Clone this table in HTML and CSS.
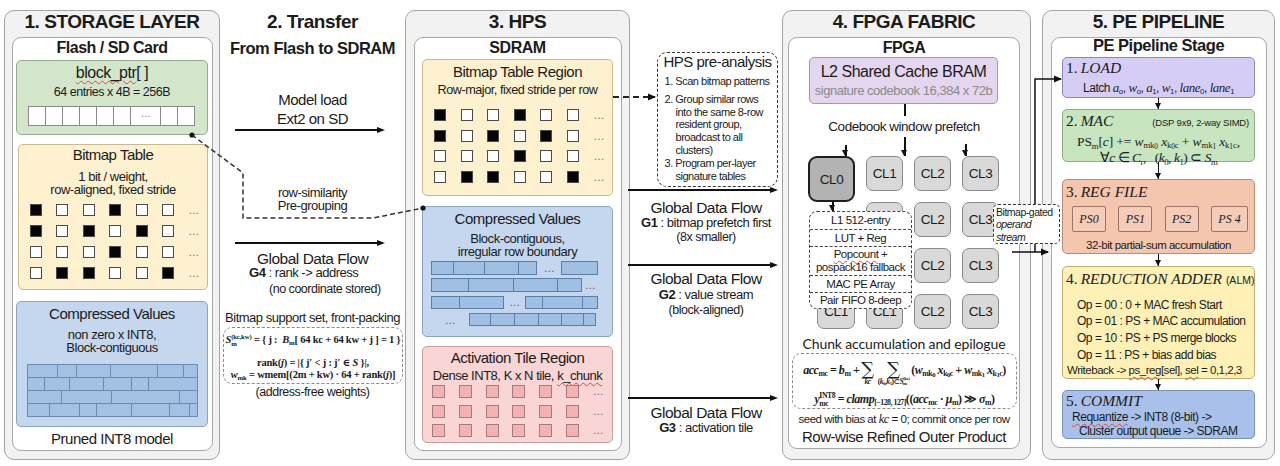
FILE: index.html
```html
<!DOCTYPE html>
<html lang="en">
<head>
<meta charset="utf-8">
<title>Sparse INT8 inference pipeline</title>
<link rel="stylesheet" href="styles.css">
</head>
<body>
<div class="page">

  <section class="panel p1">
    <h1 class="ptitle">1. STORAGE LAYER</h1>
    <div class="inner">
      <h2 class="sub">Flash / SD Card</h2>
      <div class="box green ptrbox">
        <div class="bt"><span class="sp">block_ptr</span>[ ]</div>
        <div class="bs">64 entries x 4B = 256B</div>
        <div class="cells"><span></span><span></span><span></span><span></span><span></span><span></span><span class="wide">…</span><span></span><span></span></div>
      </div>
      <div class="box yellow bm1">
        <div class="bt">Bitmap Table</div>
        <div class="bl">1 bit / weight,<br>row-aligned, fixed stride</div>
        <div class="bits">
          <i class="k"></i><i></i><i></i><i class="k"></i><i></i><i></i><b>…</b>
          <i class="k"></i><i></i><i class="k"></i><i></i><i class="k"></i><i></i><b>…</b>
          <i></i><i></i><i></i><i class="k"></i><i></i><i></i><b>…</b>
          <i></i><i class="k"></i><i class="k"></i><i></i><i></i><i class="k"></i><b>…</b>
        </div>
      </div>
      <div class="box blue cv1">
        <div class="bt">Compressed Values</div>
        <div class="bl">non zero x INT8,<br>Block-contiguous</div>
        <div class="wall">
          <div class="wr"><span style="width:30px"></span><span style="width:19px"></span><span style="width:34px"></span><span style="width:47px"></span><span style="width:26px"></span><span style="width:14px"></span></div>
          <div class="wr"><span style="width:17px"></span><span style="width:25px"></span><span style="width:34px"></span><span style="width:28px"></span><span style="width:17px"></span><span style="width:49px"></span></div>
          <div class="wr"><span style="width:34px"></span><span style="width:50px"></span><span style="width:68px"></span><span style="width:18px"></span></div>
          <div class="wr"><span style="width:22px"></span><span style="width:30px"></span><span style="width:17px"></span><span style="width:35px"></span><span style="width:38px"></span><span style="width:20px"></span><span style="width:8px"></span></div>
        </div>
      </div>
      <div class="foot">Pruned INT8 model</div>
    </div>
  </section>

  <div class="tcol">
    <div class="ttl">2. Transfer</div>
    <div class="tsub">From Flash to SDRAM</div>
    <div class="t15 ml">Model load<br>Ext2 on SD</div>
    <div class="harr ha1"></div>
    <div class="t13 rs">row-similarity<br>Pre-grouping</div>
    <div class="harr ha2"></div>
    <div class="gdf g4h">Global Data Flow</div>
    <div class="gline g4a"><b>G4</b> : rank -&gt; address</div>
    <div class="pline g4b">(no coordinate stored)</div>
    <div class="t13 bss">Bitmap support set, front-packing</div>
    <div class="fbox1">
      <div class="fl1"><i>S</i><span class="ss"><sup>(kc,kw)</sup><sub>m</sub></span> = { j :&nbsp; <i>B</i><sub>m</sub>[ 64 kc + 64 kw + j ] = 1 }</div>
      <div class="fl2">rank(<i>j</i>) = |{ j′ &lt; j : j′ ∈ <i>S</i> }|,</div>
      <div class="fl3"><i>w</i><sub>mk</sub> = wmem[(2m + kw) · 64 + rank(<i>j</i>)]</div>
    </div>
    <div class="pline afw">(address-free weights)</div>
  </div>

  <section class="panel p3">
    <h1 class="ptitle">3. HPS</h1>
    <div class="inner">
      <h2 class="sub s3">SDRAM</h2>
      <div class="box yellow bm3">
        <div class="bt">Bitmap Table Region</div>
        <div class="bl">Row-major, fixed stride per row</div>
        <div class="bits">
          <i class="k"></i><i></i><i></i><i class="k"></i><i></i><i></i><b>…</b>
          <i class="k"></i><i></i><i class="k"></i><i></i><i class="k"></i><i></i><b>…</b>
          <i></i><i></i><i></i><i class="k"></i><i></i><i></i><b>…</b>
          <i></i><i class="k"></i><i class="k"></i><i></i><i></i><i class="k"></i><b>…</b>
        </div>
      </div>
      <div class="box blue cv3">
        <div class="bt">Compressed Values</div>
        <div class="bl">Block-contiguous,<br>irregular row boundary</div>
        <div class="wall3">
          <div class="w3"><span style="width:23px"></span><span style="width:32px"></span><span style="width:35px"></span><span style="width:19px"></span><em style="width:24px">…</em><span style="width:37px"></span></div>
          <div class="w3"><span style="width:38px"></span><span style="width:46px"></span><span style="width:45px"></span><span style="width:25px"></span><em style="width:16px">…</em></div>
          <div class="w3"><span style="width:29px"></span><span style="width:45px"></span><em style="width:21px">…</em><span style="width:18px"></span><span style="width:41px"></span><span style="width:16px"></span></div>
          <div class="w3"><em style="width:38px">…</em><span style="width:22px"></span><span style="width:25px"></span><span style="width:25px"></span><span style="width:24px"></span><span style="width:23px"></span><span style="width:13px"></span></div>
        </div>
      </div>
      <div class="box pink at3">
        <div class="bt">Activation Tile Region</div>
        <div class="bl">Dense INT8, K x N tile, <span class="sp">k_chunk</span></div>
        <div class="pinks">
          <i></i><i></i><i></i><i></i><i></i><i></i><b>…</b>
          <i></i><i></i><i></i><i></i><i></i><i></i><b>…</b>
          <i></i><i></i><i></i><i></i><i></i><i></i><b>…</b>
        </div>
      </div>
    </div>
  </section>

  <div class="gcol">
    <div class="pre">
      <div class="pt">HPS pre-analysis</div>
      <ol>
        <li>1. Scan bitmap patterns</li>
        <li class="li2">2. Group similar rows<br>into the same 8-row<br>resident group,<br>broadcast to all<br>clusters)</li>
        <li>3. Program per-layer<br>signature tables</li>
      </ol>
    </div>
    <div class="harr hg1"></div>
    <div class="gdf gA">Global Data Flow</div>
    <div class="gline gB"><b>G1</b> : bitmap prefetch first</div>
    <div class="pline gC">(8x smaller)</div>
    <div class="harr hg2"></div>
    <div class="gdf gD">Global Data Flow</div>
    <div class="gline gE"><b>G2</b> : value stream</div>
    <div class="pline gF">(block-aligned)</div>
    <div class="harr hg3"></div>
    <div class="gdf gG">Global Data Flow</div>
    <div class="gline gH"><b>G3</b> : activation tile</div>
  </div>

  <section class="panel p4">
    <h1 class="ptitle">4. FPGA FABRIC</h1>
    <div class="inner">
      <h2 class="sub s4">FPGA</h2>
      <div class="box lilac l2">
        <div class="l2t">L2 Shared Cache BRAM</div>
        <div class="l2s">signature codebook 16,384 x 72b</div>
      </div>
      <div class="vline"></div>
      <div class="cwp">Codebook window prefetch</div>
      <div class="clusters">
        <i class="va v1"></i><i class="va v2"></i><i class="va v3"></i>
        <div class="clg">
          <div class="cl cl0">CL0</div>
          <div class="cl">CL1</div><div class="cl">CL2</div><div class="cl">CL3</div>
          <div class="cl"></div><div class="cl">CL2</div><div class="cl">CL3</div>
          <div class="cl c0"></div><div class="cl"></div><div class="cl">CL2</div><div class="cl">CL3</div>
          <div class="cl c0">CL1</div><div class="cl">CL1</div><div class="cl">CL2</div><div class="cl">CL3</div>
        </div>
        <i class="va v4"></i>
        <div class="l1">
          <div class="l1r r1">L1 512-entry</div>
          <div class="l1r r2">LUT + Reg</div>
          <div class="l1r r3"><span><span class="sp">Popcount</span> +<br>pospack16 fallback</span></div>
          <div class="l1r r4">MAC PE Array</div>
          <div class="l1r r5">Pair FIFO 8-deep</div>
        </div>
      </div>
      <div class="chunk">Chunk accumulation and epilogue</div>
      <div class="fbox2">
        <div class="ff1">
          <span class="fx"><i>acc</i><sub>mc</sub> = <i>b</i><sub>m</sub> +</span>
          <span class="sum"><b>∑</b><small><i>kc</i></small></span>
          <span class="sum"><b>∑</b><small>(<i>k</i><sub>0</sub>,<i>k</i><sub>1</sub>)⊂<i>S</i><span class="ss"><sup>(kc)</sup><sub>m</sub></span></small></span>
          <span class="fx">(<i>w</i><sub>mk<sub>0</sub></sub> <i>x</i><sub>k<sub>0</sub>c</sub> + <i>w</i><sub>mk<sub>1</sub></sub> <i>x</i><sub>k<sub>1</sub>c</sub>)</span>
        </div>
        <div class="ff2"><i>y</i><span class="ss"><sup>INT8</sup><sub>mc</sub></span> = <i>clamp</i><sub>[−128, 127]</sub>((<i>acc</i><sub>mc</sub> · <i>μ</i><sub>m</sub>) ≫ <i>σ</i><sub>m</sub>)</div>
      </div>
      <div class="seed">seed with bias at <i class="mi">kc</i> = 0; commit once per row</div>
      <div class="rwo">Row-wise Refined Outer Product</div>
    </div>
  </section>

  <section class="panel p5">
    <h1 class="ptitle">5. PE PIPELINE</h1>
    <div class="inner">
      <h2 class="sub s5">PE Pipeline Stage</h2>
      <div class="stage load">
        <div class="st"><span class="num">1.</span><i>LOAD</i></div>
        <div class="sl">Latch <i>a</i><sub>o</sub>, <i>w</i><sub>o</sub>, <i>a</i><sub>1</sub>, <i>w</i><sub>1</sub>, <i>lane</i><sub>0</sub>, <i>lane</i><sub>1</sub></div>
      </div>
      <div class="varr a1"></div>
      <div class="stage mac">
        <div class="st sth"><span><span class="num">2.</span><i>MAC</i></span><span class="note">(DSP 9x9, 2-way SIMD)</span></div>
        <div class="mf">PS<sub>m</sub>[<i>c</i>] += <i>w</i><sub>mk<sub>0</sub></sub> <i>x</i><sub>k<sub>0</sub>c</sub> + <i>w</i><sub>mk<sub>1</sub></sub> <i>x</i><sub>k<sub>1</sub>c</sub>,</div>
        <div class="mf2">∀<i>c</i> ∈ <i>C</i><sub>r</sub>,&nbsp;&nbsp; (<i>k</i><sub>0</sub>, <i>k</i><sub>1</sub>) ⊂ <i>S</i><sub>m</sub></div>
      </div>
      <div class="varr a2"></div>
      <div class="stage reg">
        <div class="st"><span class="num">3.</span><i>REG FILE</i></div>
        <div class="psrow"><span class="ps">PS0</span><span class="ps">PS1</span><span class="ps">PS2</span><span class="ps wide">PS 4</span></div>
        <div class="rl">32-bit partial-sum accumulation</div>
      </div>
      <div class="varr a3"></div>
      <div class="stage red">
        <div class="st"><span class="num">4.</span><i>REDUCTION ADDER</i> <span class="alm">(ALM)</span></div>
        <div class="ops">
          <div>Op = 00 : 0 + MAC fresh Start</div>
          <div>Op = 01 : PS + MAC accumulation</div>
          <div>Op = 10 : PS + PS merge blocks</div>
          <div>Op = 11 : PS + bias add bias</div>
        </div>
        <div class="wb">Writeback -&gt; <span class="sp">ps_reg</span>[sel], <span class="sp">sel</span> = 0,1,2,3</div>
      </div>
      <div class="varr a4"></div>
      <div class="stage commit">
        <div class="st"><span class="num">5.</span><i>COMMIT</i></div>
        <div class="c1"><span class="sp">Requantize</span> -&gt; INT8 (8-bit) -&gt;</div>
        <div class="c2">Cluster output queue -&gt; SDRAM</div>
      </div>
    </div>
  </section>

</div>

<svg class="wires" width="1280" height="466" viewBox="0 0 1280 466">
  <defs>
    <marker id="ah" markerWidth="8" markerHeight="8" refX="7" refY="4" orient="auto" markerUnits="userSpaceOnUse">
      <path d="M0,0.5 L8,4 L0,7.5 Z" fill="#111"/>
    </marker>
  </defs>
  <path d="M192,135 L243,173 L243,218 L373,218 L420,208.6" fill="none" stroke="#333" stroke-width="1.5" stroke-dasharray="5 3"/>
  <circle cx="192" cy="135" r="2.6" fill="#111"/>
  <circle cx="423" cy="208" r="2.6" fill="#111"/>
  <path d="M613,97 L655,97" fill="none" stroke="#222" stroke-width="1.8" stroke-dasharray="6 4" marker-end="url(#ah)"/>
  <path d="M1012,252 L1048,252" fill="none" stroke="#111" stroke-width="1.5" marker-end="url(#ah)"/>
  <path d="M1035,252 L1035,79 L1061,79" fill="none" stroke="#111" stroke-width="1.5" marker-end="url(#ah)"/>
</svg>

<div class="gated">Bitmap-gated<br><i>operand</i><br><i>stream</i></div>
</body>
</html>
```

FILE: styles.css
```css
* { box-sizing: border-box; margin: 0; padding: 0; }
html, body { width: 1280px; height: 466px; overflow: hidden; background: #fff; }
body {
  font-family: "Liberation Sans", Arial, sans-serif;
  color: #1b1b1b;
  letter-spacing: -0.03em;
  position: relative;
}
.page { display: flex; align-items: flex-start; padding: 10px 0 0 4px; }

/* panels */
.panel {
  height: 450px; flex: none;
  background: #f2f2f2; border: 1.5px solid #a4a4a4; border-radius: 10px;
  display: flex; flex-direction: column;
}
.ptitle { font-size: 19px; font-weight: 700; line-height: 22px; height: 25.5px; text-align: center; }
.inner {
  flex: 1; min-height: 0; background: #fff;
  border: 1.5px solid #a8a8a8; border-radius: 9px;
  display: flex; flex-direction: column;
}
.sub { font-size: 16px; font-weight: 700; line-height: 20px; height: 22.5px; text-align: center; flex: none; }

.p1 { width: 216px; padding: 0 6.5px 8.5px; }
.p1 .inner { padding: 0 3.5px; }
.p3 { width: 225px; padding: 0 7.5px 8.5px; }
.p3 .inner { padding: 0 7.5px; }
.p4 { width: 249px; padding: 0 10px 10.5px 5px; }
.p5 { width: 233px; padding: 0 7.5px 11.5px; margin-left: 11px; }
.p5 .inner { padding: 0 10.5px; }
.s3 { height: 21.5px; }
.s4 { height: 19.5px; }
.s5 { height: 19.5px; line-height: 15px; font-size: 16.5px; }

/* generic coloured boxes */
.box { border: 1px solid; border-radius: 5px; text-align: center; flex: none; }
.green { background: #d3e6cc; border-color: #93ad8c; }
.yellow { background: #fdf1cf; border-color: #c9b98f; }
.blue { background: #c4d7ee; border-color: #8da4c2; }
.pink { background: #f9d5d5; border-color: #c7a0a0; }
.lilac { background: #e4d6ee; border-color: #a394b0; }
.bt { font-size: 15px; line-height: 20px; }
.bl { font-size: 13px; line-height: 13px; }
.sp { text-decoration: underline wavy #d24a4a; text-decoration-thickness: 1px; text-underline-offset: 2px; }

/* storage */
.ptrbox { height: 75px; }
.ptrbox .bt { font-size: 16px; line-height: 18px; margin-top: 3px; }
.bs { font-size: 12.5px; line-height: 16px; margin-top: 2px; }
.cells { display: flex; justify-content: center; margin-top: 6px; height: 20px; }
.cells span { width: 18px; height: 20px; background: #fff; border: 1px solid #8a8a8a; margin-left: -1px; font-size: 10px; color: #777; line-height: 14px; }
.cells span.wide { width: 31px; }

.bm1 { height: 146px; margin: 9px 0 0 2px; }
.bm1 .bl { margin-top: 4.5px; }
.bits {
  display: grid; grid-template-columns: repeat(6, 12px) 14px;
  column-gap: 14.4px; row-gap: 9px; padding-left: 11px; margin-top: 8.5px;
}
.bits i { display: block; width: 12px; height: 12px; background: #fff; border: 1px solid #4a4a4a; }
.bits i.k { background: #050505; }
.bits b, .pinks b { font-weight: 400; font-size: 11px; color: #666; line-height: 12px; text-align: left; }

.cv1 { height: 126px; margin-top: 11px; }
.cv1 .bt { margin-top: 2px; }
.cv1 .bl { margin-top: 3.5px; }
.wall { width: 171px; margin: 10.5px auto 0; border-top: 1px solid #6a8bb2; border-left: 1px solid #6a8bb2; background: #a3c1e3; }
.wr { display: flex; height: 13px; }
.wr span { flex: none; height: 13px; border-right: 1px solid #6a8bb2; border-bottom: 1px solid #6a8bb2; }
.foot { font-size: 15px; line-height: 18px; margin-top: 2.5px; text-align: center; }

/* transfer column */
.tcol { width: 185px; flex: none; display: flex; flex-direction: column; text-align: center; }
.ttl { font-size: 19px; font-weight: 700; line-height: 24px; }
.tsub { font-size: 16.5px; font-weight: 700; line-height: 20px; margin-top: 4px; }
.t15 { font-size: 15px; line-height: 19px; }
.t13 { font-size: 13px; line-height: 13px; }
.ml { margin-top: 31.5px; }
.harr { position: relative; height: 8px; flex: none; }
.harr::before { content: ""; position: absolute; left: 0; right: 6px; top: 3.25px; height: 1.5px; background: #111; }
.harr::after {
  content: ""; position: absolute; right: 0; top: 0.5px;
  border-left: 8px solid #111; border-top: 3.5px solid transparent; border-bottom: 3.5px solid transparent;
}
.ha1 { margin: -1.5px 20px 0 15px; }
.rs { margin-top: 51.5px; }
.ha2 { margin: 27.5px 20px 0 15px; }
.gdf { font-size: 15.5px; line-height: 17px; }
.gline { font-size: 13px; line-height: 16px; }
.gline b { font-weight: 700; }
.pline { font-size: 12.5px; line-height: 16px; }
.g4h { margin-top: 2.5px; }
.g4a { margin-top: -1.5px; text-align: left; padding-left: 29px; }
.g4b { text-align: left; padding-left: 49px; }
.bss { line-height: 16px; margin-top: 13px; white-space: nowrap; }
.fbox1 {
  height: 57px; margin: 1px 2px 0 3px;
  border: 1.5px dashed #8a8a8a; border-radius: 9px;
  font-family: "Liberation Serif", "DejaVu Serif", serif; font-weight: 700; font-size: 10.5px;
  white-space: nowrap; letter-spacing: -0.02em;
}
.fl1 { line-height: 16px; margin-top: 4px; }
.fl2 { line-height: 12px; margin-top: 8.5px; }
.fl3 { line-height: 12px; }
sub, sup { font-size: 65%; line-height: 0; }
sub { vertical-align: -0.3em; }
sup { vertical-align: 0.55em; }
sub sub { font-size: 85%; vertical-align: -0.15em; }
.ss { display: inline-flex; flex-direction: column; vertical-align: middle; font-size: 65%; line-height: 1; text-align: left; }
.ss sub, .ss sup { font-size: 100%; vertical-align: baseline; line-height: 1; }

/* HPS */
.bm3 { height: 137px; }
.bm3 .bt { margin-top: 1.5px; line-height: 19px; }
.bm3 .bl { line-height: 15px; margin-top: 2px; font-size: 12.7px; white-space: nowrap; }
.bm3 .bits { margin-top: 11.5px; column-gap: 14.6px; row-gap: 8.7px; }
.cv3 { height: 131px; margin-top: 10px; }
.cv3 .bt { margin-top: 1.5px; line-height: 19px; }
.cv3 .bl { margin-top: 4.5px; }
.wall3 { display: flex; flex-direction: column; gap: 3.8px; margin-top: 3px; padding-left: 8px; }
.w3 { display: flex; height: 13.5px; }
.w3 span { flex: none; height: 13.5px; background: #9fbfe3; border: 1px solid #5b7ea8; }
.w3 span + span { margin-left: -1px; }
.w3 em { flex: none; font-style: normal; font-size: 11px; color: #555; display: flex; align-items: center; justify-content: center; }
.at3 { height: 97px; margin-top: 9px; }
.at3 .bt { margin-top: 0.5px; line-height: 19px; }
.at3 .bl { line-height: 14px; margin-top: 2.5px; white-space: nowrap; }
.pinks {
  display: grid; grid-template-columns: repeat(6, 13px) 16px;
  column-gap: 13.8px; row-gap: 6.5px; padding-left: 9px; margin-top: 2px;
}
.pinks i { display: block; width: 13px; height: 13px; background: #f4b3b3; border: 1px solid #a87a7a; }
.pinks b { line-height: 13px; }

/* gap column */
.gcol { width: 152px; flex: none; display: flex; flex-direction: column; text-align: center; }
.pre {
  margin: 42px 0 0 27px; width: 121px; height: 135px;
  border: 1.5px dashed #333; border-radius: 10px; text-align: left;
}
.pt { font-size: 15px; line-height: 18px; text-align: center; }
.pre ol { list-style: none; margin-top: 4px; padding-left: 6.5px; font-size: 11px; line-height: 12.8px; white-space: nowrap; }
.pre li { padding-left: 11px; text-indent: -11px; }
.pre li.li2 { margin: 5px 0 0; }
.hg1 { margin: -1px 4px 0 -2px; }
.gA { margin-top: 4.5px; }
.gB { margin-top: -0.5px; }
.gC { margin-top: -2px; }
.hg2 { margin: 16px 4px 0 -2px; }
.gD { margin-top: 0.5px; }
.gE { margin-top: 0.5px; }
.gF { margin-top: -1px; }
.hg3 { margin: 76px 4px 0 -2px; }
.gG { margin-top: 1.5px; }
.gH { margin-top: -0.5px; }

/* FPGA */
.l2 { width: 189px; height: 47px; margin-left: 20px; }
.l2t { font-size: 16px; line-height: 20px; margin-top: 3.5px; }
.l2s { font-size: 13px; line-height: 16px; margin-top: 1px; color: #8a8a8a; white-space: nowrap; }
.vline { width: 1.5px; height: 12px; background: #111; margin-left: 115px; flex: none; }
.cwp { font-size: 13.5px; line-height: 17px; margin-top: 1.5px; text-align: center; flex: none; }
.clusters { position: relative; height: 196px; flex: none; }
.clg {
  display: grid; grid-template-columns: 47px 37px 37px 37px; grid-template-rows: repeat(4, 35px);
  column-gap: 11px; row-gap: 11px; margin: 21.5px 0 0 19px;
}
.cl {
  background: #d9d9d9; border: 1.5px solid #8a8a8a; border-radius: 7px;
  display: flex; align-items: center; justify-content: center; font-size: 13.5px;
}
.cl0 { grid-row: 1 / 3; height: 46px; align-self: start; background: #b3b3b3; border: 2px solid #1e1e1e; border-radius: 9px; }
.c0 { justify-self: end; width: 38px; }
.va { position: absolute; width: 1.5px; background: #111; }
.va::after {
  content: ""; position: absolute; left: -2.75px; bottom: 0;
  border-top: 6px solid #111; border-left: 3.5px solid transparent; border-right: 3.5px solid transparent;
}
.v1 { left: 56px; top: 10.5px; height: 10.5px; }
.v2 { left: 115px; top: 2px; height: 19px; }
.v3 { left: 176px; top: 9.5px; height: 11.5px; }
.v4 { left: 43px; top: 67.5px; height: 9px; }
.l1 {
  position: absolute; left: 20px; top: 76.5px; width: 103px; height: 98px;
  background: #fff; border: 1.5px dashed #444; border-radius: 8px;
  display: flex; flex-direction: column; font-size: 11.5px; text-align: center; white-space: nowrap;
}
.l1r { display: flex; align-items: center; justify-content: center; }
.l1r + .l1r { border-top: 1.5px dashed #444; }
.r1 { height: 16.5px; }
.r2 { height: 17px; }
.r3 { height: 29px; line-height: 13px; }
.r4 { height: 17px; }
.r5 { height: 15.5px; }
.chunk { font-family: Lato, "Open Sans", sans-serif; font-size: 14px; line-height: 18px; margin-top: 4.5px; text-align: center; letter-spacing: -0.01em; flex: none; }
.fbox2 {
  width: 225px; height: 56px; margin-left: 3px; flex: none;
  border: 1.5px dashed #8a8a8a; border-radius: 9px;
  font-family: "Liberation Serif", "DejaVu Serif", serif; font-weight: 700; white-space: nowrap;
}
.ff1 { display: flex; justify-content: center; align-items: flex-start; height: 34px; font-size: 12px; }
.ff1 .fx { line-height: 16px; margin-top: 8px; }
.sum { display: flex; flex-direction: column; align-items: center; margin: 0 2px; }
.sum b { font-family: "DejaVu Serif", serif; font-weight: 400; font-size: 18px; line-height: 17px; margin-top: 6px; }
.sum small { font-size: 7.5px; line-height: 9px; }
.ff2 { font-size: 12px; line-height: 16px; text-align: center; margin-top: 3px; }
.seed { font-size: 11.5px; line-height: 15px; margin-top: 2.5px; text-align: center; white-space: nowrap; flex: none; }
.mi { font-family: "Liberation Serif", serif; font-size: 12.5px; }
.rwo { font-size: 15px; line-height: 18px; margin-top: 1px; text-align: center; flex: none; }

/* PE */
.stage { border: 1px solid; border-radius: 5px; flex: none; }
.st { font-family: "Liberation Serif", "DejaVu Serif", serif; font-size: 15.5px; line-height: 20px; padding-left: 3px; letter-spacing: 0; }
.st .num { margin-right: 3px; }
.load { height: 41px; background: #d6cdf6; border-color: #8f86b8; }
.sl { font-size: 12px; line-height: 16px; margin-top: 1.5px; text-align: center; white-space: nowrap; }
.sl i, .ps, .mf i, .mf2 i { font-family: "Liberation Serif", serif; }
.sl i { font-size: 13px; }
.varr { position: relative; flex: none; }
.varr::before { content: ""; position: absolute; left: calc(50% - 1px); top: 0; bottom: 0; width: 1.5px; background: #111; }
.varr::after {
  content: ""; position: absolute; left: calc(50% - 3.75px); bottom: 0;
  border-top: 6px solid #111; border-left: 3.5px solid transparent; border-right: 3.5px solid transparent;
}
.a1 { height: 11px; }
.a2 { height: 17px; }
.a3 { height: 12px; }
.a4 { height: 11px; }
.mac { height: 53px; background: #c7e5bf; border-color: #8fae88; }
.sth { display: flex; justify-content: space-between; align-items: baseline; padding-right: 5px; margin-top: 1px; }
.note { font-family: "Liberation Sans", Arial, sans-serif; font-size: 9.5px; letter-spacing: -0.02em; }
.mf { font-family: "Liberation Serif", serif; font-size: 13.5px; line-height: 14px; margin-top: 1.5px; text-align: center; white-space: nowrap; letter-spacing: -0.01em; }
.mf2 { font-family: "Liberation Serif", serif; font-size: 13.5px; line-height: 13px; margin-top: 2px; text-align: center; white-space: nowrap; }
.reg { height: 75px; background: #f4c6ad; border-color: #b68d7a; }
.reg .st { margin-top: 2px; }
.psrow { display: flex; justify-content: space-between; padding: 0 6px 0 9px; margin-top: 4px; }
.ps { width: 34px; height: 26px; border: 1px solid #9c7464; background: #f5ccb7; border-radius: 2px; font-style: italic; font-size: 12px; display: flex; align-items: center; justify-content: center; letter-spacing: 0; }
.ps.wide { width: 37px; }
.rl { font-size: 11.5px; line-height: 15px; margin-top: 5.5px; text-align: center; white-space: nowrap; }
.red { height: 113px; background: #fff0b5; border-color: #c0ae72; }
.red .st { margin-top: 1.5px; white-space: nowrap; }
.alm { font-family: "Liberation Sans", Arial, sans-serif; font-size: 10.5px; }
.ops { margin-top: 7px; padding-left: 14px; font-size: 12px; line-height: 16.7px; white-space: nowrap; }
.wb { padding-left: 4px; font-size: 11.5px; line-height: 14px; white-space: nowrap; }
.commit { height: 49px; background: #a8c0ea; border-color: #7a8fb7; }
.c1 { font-size: 12px; line-height: 14px; margin-top: -1px; padding-left: 9px; white-space: nowrap; }
.c2 { font-size: 12px; line-height: 14px; padding-left: 16px; white-space: nowrap; }

/* overlays */
.wires { position: absolute; left: 0; top: 0; z-index: 2; pointer-events: none; }
.gated {
  position: absolute; left: 993px; top: 204px; width: 67px; height: 40px; z-index: 3;
  background: #fff; border: 1.5px dashed #333; border-radius: 5px;
  font-size: 10.5px; line-height: 12.5px; padding: 0.5px 0 0 2px; white-space: nowrap; overflow: hidden;
}
```
